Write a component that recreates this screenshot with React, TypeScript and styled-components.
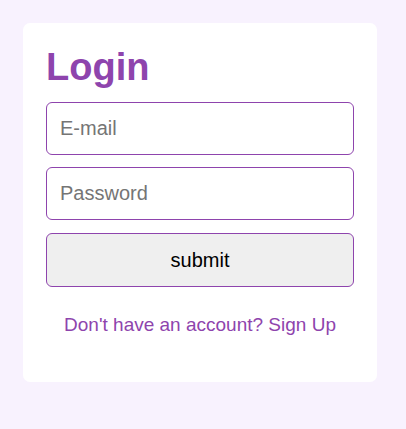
import styled, { createGlobalStyle } from 'styled-components';

const GlobalStyle = createGlobalStyle`
  body {
    margin: 0;
    background: #f8f2fe;
    font-family: "Liberation Sans", Arial, sans-serif;
  }
`;

const Page = styled.div`
  padding: 23px;
`;

const Card = styled.form`
  width: 354px;
  box-sizing: border-box;
  background: #ffffff;
  border-radius: 7px;
  padding: 23px 23px 46px;
  display: flex;
  flex-direction: column;
`;

const Title = styled.h1`
  margin: 0 0 13px;
  font-size: 38px;
  font-weight: 700;
  color: #8e44ad;
  line-height: 43px;
`;

const Field = styled.input`
  height: 53px;
  box-sizing: border-box;
  margin-bottom: 12px;
  padding: 0 13px;
  border: 1px solid #8e44ad;
  border-radius: 6px;
  font-family: inherit;
  font-size: 20px;
  color: #333;
  outline: none;
  &::placeholder {
    color: #757575;
  }
`;

const Submit = styled.button`
  height: 54px;
  margin-top: 1px;
  border: 1px solid #8e44ad;
  border-radius: 6px;
  background: #efefef;
  font-family: inherit;
  font-size: 20px;
  color: #000;
  cursor: pointer;
`;

const Footer = styled.p`
  margin: 27px 0 0;
  text-align: center;
  font-size: 19px;
  line-height: 22px;
  color: #8e44ad;
`;

const Link = styled.a`
  color: inherit;
  text-decoration: none;
`;

export default function App() {
  return (
    <Page>
      <GlobalStyle />
      <Card onSubmit={(e) => e.preventDefault()}>
        <Title>Login</Title>
        <Field type="email" placeholder="E-mail" />
        <Field type="password" placeholder="Password" />
        <Submit type="submit">submit</Submit>
        <Footer>
          Don't have an account? <Link href="#">Sign Up</Link>
        </Footer>
      </Card>
    </Page>
  );
}
